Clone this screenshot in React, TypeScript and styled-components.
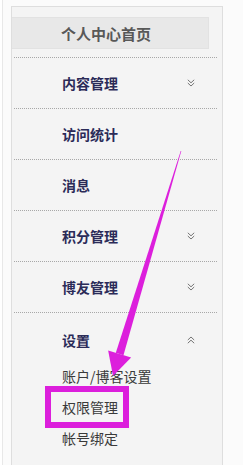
import React from 'react';
import styled, { createGlobalStyle } from 'styled-components';

const GlobalStyle = createGlobalStyle`
  html, body {
    margin: 0;
    padding: 0;
    background: #ffffff;
  }
  body {
    font-family: "Noto Sans CJK SC", "Liberation Sans", sans-serif;
  }
`;

const Page = styled.div`
  position: relative;
  width: 243px;
  height: 465px;
  overflow: hidden;
  background: #fbfbfb;
  box-sizing: border-box;
  margin-left: 2px;
  border-left: 1px solid #e8e8e8;
  padding: 6px 0 0 8px;
`;

const Panel = styled.div`
  width: 212px;
  height: 470px;
  box-sizing: border-box;
  background: #f4f4f4;
  border: 1px solid #dedede;
  border-bottom: none;
  padding-top: 10px;
`;

const Header = styled.div`
  height: 32px;
  margin-right: 13px;
  box-sizing: border-box;
  background: #e8e8e8;
  border: 1px solid #e2e2e2;
  border-left: none;
  display: flex;
  align-items: center;
  justify-content: center;
  padding-right: 8px;
  font-size: 15px;
  font-weight: 700;
  color: #585858;
`;

const MenuList = styled.div`
  margin: 8px 5px 0 2px;
`;

const Row = styled.div<{ $open?: boolean }>`
  height: ${(p) => (p.$open ? 43 : 50)}px;
  padding-top: ${(p) => (p.$open ? 5 : 0)}px;
  box-sizing: content-box;
  border-top: 1px dotted #a8a8a8;
  display: flex;
  align-items: center;
  padding-left: 48px;
  padding-right: 22px;
  font-size: 14px;
  font-weight: 700;
  color: #2b2b58;
`;

const RowLabel = styled.span`
  flex: 1;
`;

const Chevron = styled.svg`
  width: 8px;
  height: 8px;
  display: block;
`;

const SubList = styled.div`
  padding-left: 48px;
`;

const SubItem = styled.div<{ $marked?: boolean }>`
  position: relative;
  height: 31px;
  line-height: 31px;
  font-size: 14px;
  color: #3a3a3a;

  ${(p) =>
    p.$marked &&
    `
    &::before {
      content: '';
      position: absolute;
      left: -17px;
      top: -6px;
      width: 72px;
      height: 30px;
      border: 6px solid #dc1fdc;
    }
  `}
`;

const Overlay = styled.svg`
  position: absolute;
  left: 0;
  top: 0;
  width: 243px;
  height: 465px;
  pointer-events: none;
`;

function DoubleChevron({ up }: { up?: boolean }) {
  return (
    <Chevron viewBox='0 0 8 8'>
      <g
        fill='none'
        stroke='#666666'
        strokeWidth='0.9'
        transform={up ? 'rotate(180 4 4)' : undefined}
      >
        <polyline points='0.8,0.8 4,3.8 7.2,0.8' />
        <polyline points='0.8,4 4,7 7.2,4' />
      </g>
    </Chevron>
  );
}

const items = [
  { label: '内容管理', more: true },
  { label: '访问统计' },
  { label: '消息' },
  { label: '积分管理', more: true },
  { label: '博友管理', more: true }
];

const subItems = ['账户/博客设置', '权限管理', '帐号绑定'];

// arrow drawn over the page, start thin at top and widen towards the head
function Arrow() {
  const sx = 178, sy = 151;
  const tx = 110, ty = 376;
  const dx = tx - sx, dy = ty - sy;
  const len = Math.hypot(dx, dy);
  const ux = dx / len, uy = dy / len;
  const nx = -uy, ny = ux;
  const bx = tx - 23 * ux, by = ty - 23 * uy;
  const shaft = [
    [sx + 0.3 * nx, sy + 0.3 * ny],
    [bx + 4 * nx, by + 4 * ny],
    [bx - 4 * nx, by - 4 * ny],
    [sx - 0.3 * nx, sy - 0.3 * ny]
  ];
  const head = [
    [bx + 12 * nx, by + 12 * ny],
    [tx, ty],
    [bx - 12 * nx, by - 12 * ny]
  ];
  const pts = (a: number[][]) => a.map((p) => p.join(',')).join(' ');

  return (
    <Overlay viewBox='0 0 243 465'>
      <polygon fill='#dc1fdc' points={pts(shaft)} />
      <polygon fill='#dc1fdc' points={pts(head)} />
    </Overlay>
  );
}

export default function App(): React.ReactElement {
  return (
    <>
      <GlobalStyle />
      <Page>
        <Panel>
          <Header>个人中心首页</Header>
          <MenuList>
            {items.map((item) => (
              <Row key={item.label}>
                <RowLabel>{item.label}</RowLabel>
                {item.more && <DoubleChevron />}
              </Row>
            ))}
            <Row $open>
              <RowLabel>设置</RowLabel>
              <DoubleChevron up />
            </Row>
            <SubList>
              {subItems.map((s) => (
                <SubItem key={s} $marked={s === '权限管理'}>{s}</SubItem>
              ))}
            </SubList>
          </MenuList>
        </Panel>
        <Arrow />
      </Page>
    </>
  );
}
